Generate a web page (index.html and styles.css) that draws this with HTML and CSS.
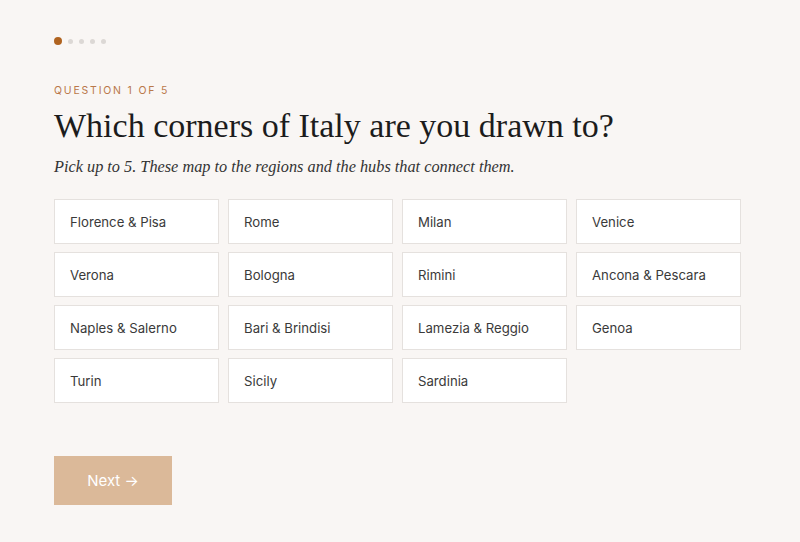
FILE: index.html
```html
<!DOCTYPE html>
<html lang="en">
<head>
  <meta charset="UTF-8" />
  <title>Which corners of Italy?</title>
  <link rel="stylesheet" href="styles.css">
</head>
<body>

<div class="quiz">
  <div class="progress">
    <span class="dot active"></span>
    <span class="dot"></span>
    <span class="dot"></span>
    <span class="dot"></span>
    <span class="dot"></span>
  </div>

  <p class="step">Question 1 of 5</p>
  <h1 class="title">Which corners of Italy are you drawn to?</h1>
  <p class="hint">Pick up to 5. These map to the regions and the hubs that connect them.</p>

  <div class="options">
    <button class="option">Florence &amp; Pisa</button>
    <button class="option">Rome</button>
    <button class="option">Milan</button>
    <button class="option">Venice</button>
    <button class="option">Verona</button>
    <button class="option">Bologna</button>
    <button class="option">Rimini</button>
    <button class="option">Ancona &amp; Pescara</button>
    <button class="option">Naples &amp; Salerno</button>
    <button class="option">Bari &amp; Brindisi</button>
    <button class="option">Lamezia &amp; Reggio</button>
    <button class="option">Genoa</button>
    <button class="option">Turin</button>
    <button class="option">Sicily</button>
    <button class="option">Sardinia</button>
  </div>

  <button class="next" disabled>Next &rarr;</button>
</div>

</body>
</html>
```

FILE: styles.css
```css
html, body {
  margin: 0;
  padding: 0;
  background: #f9f6f4;
  font-family: Inter, "Liberation Sans", sans-serif;
  color: #2b2b2b;
}

.quiz {
  padding: 37px 54px 0 54px;
  width: 687px;
}

.progress {
  display: flex;
  align-items: center;
  gap: 6px;
  height: 8px;
}

.dot {
  width: 5px;
  height: 5px;
  border-radius: 50%;
  background: #dcd8d5;
}

.dot.active {
  width: 8px;
  height: 8px;
  background: #b0631f;
}

.step {
  margin: 39px 0 0 0;
  font-size: 10.5px;
  letter-spacing: 1.8px;
  text-transform: uppercase;
  color: #b9784a;
  line-height: 14px;
}

.title {
  margin: 8px 0 0 0;
  font-family: "Liberation Serif", "DejaVu Serif", serif;
  font-weight: normal;
  font-size: 34px;
  line-height: 40px;
  color: #1c1c1c;
}

.hint {
  margin: 10px 0 0 0;
  font-family: "Liberation Serif", "DejaVu Serif", serif;
  font-style: italic;
  font-size: 16.3px;
  line-height: 22px;
  color: #333;
}

.options {
  margin-top: 21px;
  display: grid;
  grid-template-columns: repeat(4, 165px);
  column-gap: 9px;
  row-gap: 8px;
}

.option {
  height: 45px;
  background: #fff;
  border: 1px solid #e5e1de;
  padding: 0 15px;
  text-align: left;
  font-family: Inter, "Liberation Sans", sans-serif;
  font-size: 13.2px;
  color: #3a3a3a;
  cursor: pointer;
}

.next {
  margin-top: 53px;
  width: 118px;
  height: 49px;
  border: none;
  background: #dbb999;
  color: #fff;
  font-family: Inter, "Liberation Sans", sans-serif;
  font-size: 15px;
}
```
